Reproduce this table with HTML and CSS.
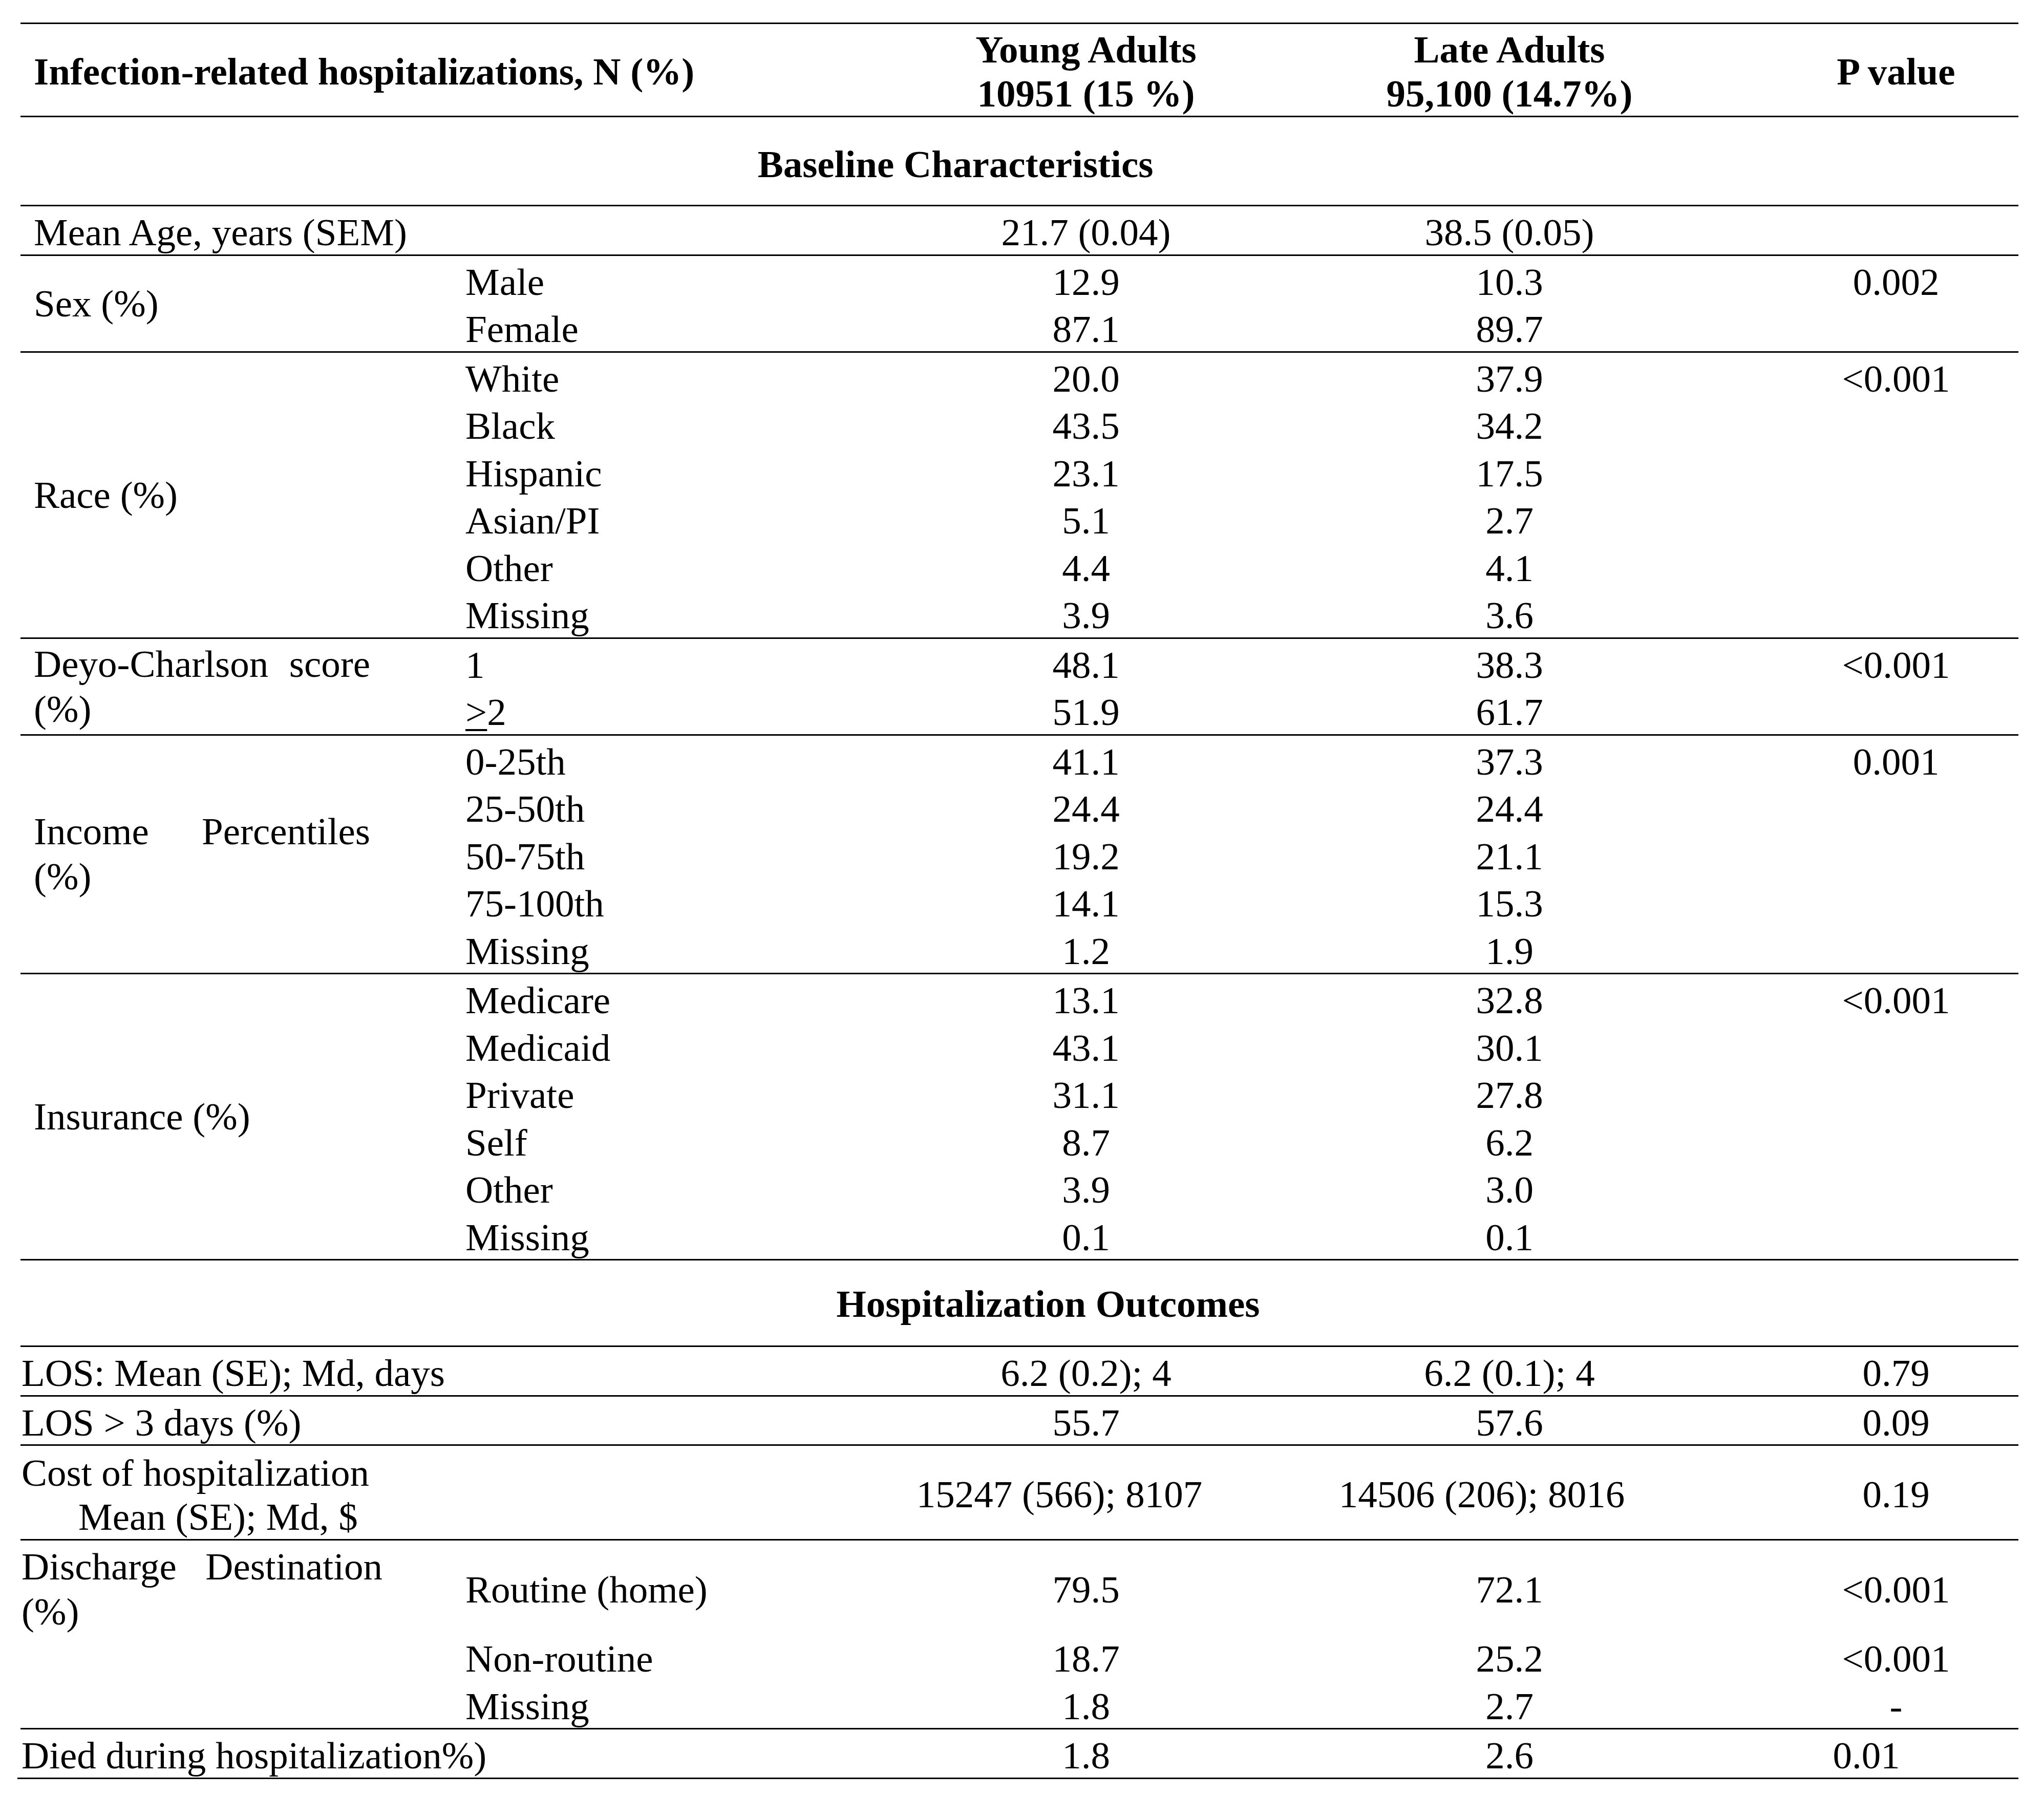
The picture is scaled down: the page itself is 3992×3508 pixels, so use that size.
FILE: index.html
```html
<!DOCTYPE html>
<html lang="en">
<head>
<meta charset="utf-8">
<title>Infection-related hospitalizations</title>
<link rel="stylesheet" href="styles.css">
</head>
<body>
<div class="table">
  <div class="row head">
    <div class="lab wide hd bold">Infection-related hospitalizations, N (%)</div>
    <div class="cc hv bold">Young Adults<br>10951 (15 %)</div>
    <div class="cd hv bold">Late Adults<br>95,100 (14.7%)</div>
    <div class="ce hd bold">P value</div>
  </div>

  <div class="row sec sec-base bold">Baseline Characteristics</div>

  <div class="row single">
    <div class="lab wide">Mean Age, years (SEM)</div>
    <div class="cc">21.7 (0.04)</div>
    <div class="cd">38.5 (0.05)</div>
    <div class="ce"></div>
  </div>

  <div class="row">
    <div class="lab">Sex (%)</div>
    <div class="sub">
      <div class="line"><div class="b">Male</div><div class="v">12.9</div><div class="v">10.3</div><div class="p">0.002</div></div>
      <div class="line"><div class="b">Female</div><div class="v">87.1</div><div class="v">89.7</div><div class="p"></div></div>
    </div>
  </div>

  <div class="row">
    <div class="lab">Race (%)</div>
    <div class="sub">
      <div class="line"><div class="b">White</div><div class="v">20.0</div><div class="v">37.9</div><div class="p">&lt;0.001</div></div>
      <div class="line"><div class="b">Black</div><div class="v">43.5</div><div class="v">34.2</div><div class="p"></div></div>
      <div class="line"><div class="b">Hispanic</div><div class="v">23.1</div><div class="v">17.5</div><div class="p"></div></div>
      <div class="line"><div class="b">Asian/PI</div><div class="v">5.1</div><div class="v">2.7</div><div class="p"></div></div>
      <div class="line"><div class="b">Other</div><div class="v">4.4</div><div class="v">4.1</div><div class="p"></div></div>
      <div class="line"><div class="b">Missing</div><div class="v">3.9</div><div class="v">3.6</div><div class="p"></div></div>
    </div>
  </div>

  <div class="row">
    <div class="lab">Deyo-Charlson score (%)</div>
    <div class="sub">
      <div class="line"><div class="b">1</div><div class="v">48.1</div><div class="v">38.3</div><div class="p">&lt;0.001</div></div>
      <div class="line"><div class="b"><span class="ul">&gt;</span>2</div><div class="v">51.9</div><div class="v">61.7</div><div class="p"></div></div>
    </div>
  </div>

  <div class="row">
    <div class="lab">Income Percentiles (%)</div>
    <div class="sub">
      <div class="line"><div class="b">0-25th</div><div class="v">41.1</div><div class="v">37.3</div><div class="p">0.001</div></div>
      <div class="line"><div class="b">25-50th</div><div class="v">24.4</div><div class="v">24.4</div><div class="p"></div></div>
      <div class="line"><div class="b">50-75th</div><div class="v">19.2</div><div class="v">21.1</div><div class="p"></div></div>
      <div class="line"><div class="b">75-100th</div><div class="v">14.1</div><div class="v">15.3</div><div class="p"></div></div>
      <div class="line"><div class="b">Missing</div><div class="v">1.2</div><div class="v">1.9</div><div class="p"></div></div>
    </div>
  </div>

  <div class="row">
    <div class="lab">Insurance (%)</div>
    <div class="sub">
      <div class="line"><div class="b">Medicare</div><div class="v">13.1</div><div class="v">32.8</div><div class="p">&lt;0.001</div></div>
      <div class="line"><div class="b">Medicaid</div><div class="v">43.1</div><div class="v">30.1</div><div class="p"></div></div>
      <div class="line"><div class="b">Private</div><div class="v">31.1</div><div class="v">27.8</div><div class="p"></div></div>
      <div class="line"><div class="b">Self</div><div class="v">8.7</div><div class="v">6.2</div><div class="p"></div></div>
      <div class="line"><div class="b">Other</div><div class="v">3.9</div><div class="v">3.0</div><div class="p"></div></div>
      <div class="line"><div class="b">Missing</div><div class="v">0.1</div><div class="v">0.1</div><div class="p"></div></div>
    </div>
  </div>

  <div class="row sec sec-out bold">Hospitalization Outcomes</div>

  <div class="row single">
    <div class="lab wide lo">LOS: Mean (SE); Md, days</div>
    <div class="cc">6.2 (0.2); 4</div>
    <div class="cd">6.2 (0.1); 4</div>
    <div class="ce">0.79</div>
  </div>

  <div class="row single">
    <div class="lab wide lo">LOS &gt; 3 days (%)</div>
    <div class="cc">55.7</div>
    <div class="cd">57.6</div>
    <div class="ce">0.09</div>
  </div>

  <div class="row cost">
    <div class="lab wide lo top">
      <div>Cost of hospitalization</div>
      <div class="indent">Mean (SE); Md, $</div>
    </div>
    <div class="cc mid shift">15247 (566); 8107</div>
    <div class="cd mid shift">14506 (206); 8016</div>
    <div class="ce mid">0.19</div>
  </div>

  <div class="row">
    <div class="lab lo top dis">Discharge Destination (%)</div>
    <div class="sub flush">
      <div class="line tall"><div class="b">Routine (home)</div><div class="v">79.5</div><div class="v">72.1</div><div class="p">&lt;0.001</div></div>
      <div class="line"><div class="b">Non-routine</div><div class="v">18.7</div><div class="v">25.2</div><div class="p">&lt;0.001</div></div>
      <div class="line"><div class="b">Missing</div><div class="v">1.8</div><div class="v">2.7</div><div class="p">-</div></div>
    </div>
  </div>

  <div class="row single last">
    <div class="lab wide lo">Died during hospitalization%)</div>
    <div class="cc">1.8</div>
    <div class="cd">2.6</div>
    <div class="ce endp">0.01</div>
  </div>
</div>
</body>
</html>
```

FILE: styles.css
```css
* {
  box-sizing: border-box;
  margin: 0;
  padding: 0;
}

html,
body {
  background: #ffffff;
}

body {
  font-family: "Liberation Serif", "Times New Roman", serif;
  font-size: 75px;
  line-height: 92.5px;
  color: #000000;
}

.bold {
  font-weight: bold;
}

.table {
  margin: 44px 0 0 40px;
  width: 3902px;
  border-top: 3px solid #000000;
}

.row {
  display: flex;
  border-bottom: 3px solid #000000;
}

.row.single {
  padding-top: 1px;
}

/* text in single rows sits a little lower without growing the row */
.row.single > * {
  padding-top: 4px;
  margin-bottom: -4px;
}

.row.last {
  margin-left: -6px;
  padding-left: 6px;
}

/* first column label */
.lab {
  flex: none;
  width: 840px;
  padding: 0 157px 0 26px;
  text-align: justify;
  line-height: 88px;
  align-self: center;
}

.lab.wide {
  width: 1670px;
  padding-right: 0;
  text-align: left;
  line-height: 92.5px;
}

.lab.lo {
  padding-left: 2px;
  padding-right: 133px;
}

.lab.wide.lo {
  padding-right: 0;
}

.lab.top {
  align-self: flex-start;
  line-height: 86px;
  padding-top: 10px;
}

.lab.dis {
  line-height: 88px;
  padding-top: 7px;
}

.indent {
  padding-left: 111px;
}

/* value columns for single rows */
.cc {
  flex: none;
  width: 822px;
  text-align: center;
}

.cd {
  flex: none;
  width: 832px;
  text-align: center;
}

.ce {
  flex: none;
  width: 578px;
  text-align: center;
  padding-left: 100px;
}

.ce.endp {
  padding-left: 0;
  padding-right: 16px;
}

.mid {
  align-self: center;
  padding-top: 8px;
}

.cc.shift {
  padding-right: 104px;
}

.cd.shift {
  padding-right: 108px;
}

/* header row */
.head .hd {
  align-self: center;
  line-height: 86px;
  padding-top: 6px;
}

.head .hv {
  line-height: 86px;
  padding-top: 7px;
}

/* section title rows */
.sec {
  display: block;
  text-align: center;
}

.sec-base {
  padding: 46px 250px 32.5px 0;
}

.sec-out {
  padding: 39px 0 34.5px 112px;
}

/* grouped rows */
.sub {
  flex: none;
  width: 3062px;
  display: flex;
  flex-direction: column;
  padding-top: 5px;
  margin-bottom: -4px;
}

.sub.flush {
  padding-top: 4px;
}

.line {
  display: grid;
  grid-template-columns: 830px 822px 832px 578px;
}

.line.tall {
  padding-top: 46px;
  padding-bottom: 42.5px;
}

.b {
  padding-left: 29px;
  white-space: nowrap;
}

.v {
  text-align: center;
}

.p {
  text-align: center;
  padding-left: 100px;
}

.ul {
  text-decoration: underline;
  text-decoration-thickness: 4px;
  text-underline-offset: 8px;
}
```
